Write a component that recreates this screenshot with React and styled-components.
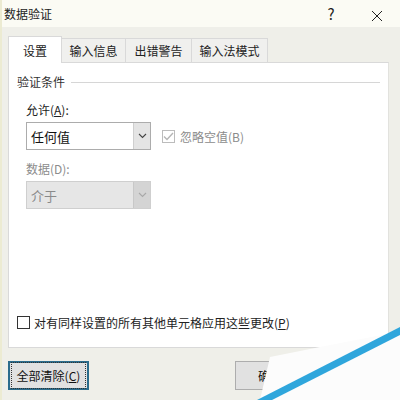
import React from 'react';
import styled, { createGlobalStyle } from 'styled-components';

const GlobalStyle = createGlobalStyle`
  html, body { margin: 0; padding: 0; }
  body {
    font-family: "Noto Sans CJK SC", "Noto Sans", sans-serif;
    font-size: 12px;
    color: #1a1a1a;
    background: #f0f0ea;
  }
`;

const Dialog = styled.div`
  position: relative;
  width: 400px;
  height: 400px;
  overflow: hidden;
  background: #efefe9;
  border-left: 2px solid #ecebd2;
  box-sizing: border-box;
`;

const TitleBar = styled.div`
  height: 27px;
  display: flex;
  align-items: center;
  padding-left: 2px;
  background: #fbfbf4;
`;

const Title = styled.div`
  flex: 1;
  font-size: 12px;
  color: #222;
`;

const TitleButton = styled.div`
  width: ${p => p.w}px;
  text-align: center;
  font-size: ${p => p.size}px;
  color: #222;
  line-height: 1;
`;

const Body = styled.div`
  padding: 9px 10px 0 6px;
`;

const TabRow = styled.div`
  display: flex;
  align-items: flex-end;
  height: 27px;
`;

const Tab = styled.div`
  box-sizing: border-box;
  width: ${p => p.w}px;
  height: ${p => (p.active ? 27 : 25)}px;
  display: flex;
  align-items: center;
  justify-content: center;
  background: ${p => (p.active ? '#fff' : '#f0f0ee')};
  border: 1px solid #d9d9d9;
  border-bottom: ${p => (p.active ? 'none' : '1px solid #d9d9d9')};
  margin-left: -1px;
  position: relative;
  z-index: ${p => (p.active ? 2 : 1)};
  font-size: 12px;
  color: #222;
  &:first-child { margin-left: 0; }
`;

const Panel = styled.div`
  box-sizing: border-box;
  width: 381px;
  height: 286px;
  margin-top: -1px;
  background: #fff;
  border: 1px solid #d9d9d9;
  border-right-color: #e2e2de;
  display: flex;
  flex-direction: column;
  padding: 10px 8px 0 8px;
`;

const GroupHead = styled.div`
  display: flex;
  align-items: center;
  gap: 6px;
  color: #333;
`;

const GroupLine = styled.div`
  flex: 1;
  height: 0;
  border-top: 1px solid #d6d6d6;
  margin-top: 2px;
`;

const Fields = styled.div`
  padding-left: 9px;
  margin-top: 11px;
`;

const Label = styled.div`
  color: ${p => (p.disabled ? '#8c8c8c' : '#222')};
  height: 18px;
  line-height: 18px;
  u { text-decoration: underline; }
`;

const FieldRow = styled.div`
  display: flex;
  align-items: center;
  gap: 11px;
  margin: 3px 0 ${p => p.mb || 0}px;
`;

const Combo = styled.div`
  box-sizing: border-box;
  width: 125px;
  height: 28px;
  display: flex;
  border: 1px solid ${p => (p.disabled ? '#cfcfcf' : '#acacac')};
  background: ${p => (p.disabled ? '#e6e6e6' : '#fff')};
`;

const ComboText = styled.div`
  flex: 1;
  display: flex;
  align-items: center;
  padding-left: 4px;
  font-size: 13px;
  color: ${p => (p.disabled ? '#8a8a8a' : '#111')};
`;

const ComboButton = styled.div`
  width: 16px;
  display: flex;
  align-items: center;
  justify-content: center;
  border-left: 1px solid ${p => (p.disabled ? '#c8c8c8' : '#cfcfcf')};
  background: ${p => (p.disabled ? '#d4d4d4' : '#e4e4e4')};
`;

const Check = styled.div`
  display: flex;
  align-items: center;
  gap: 5px;
  color: ${p => (p.disabled ? '#8c8c8c' : '#222')};
  font-size: 12px;
`;

const Box = styled.div`
  box-sizing: border-box;
  width: 13px;
  height: 13px;
  border: 1px solid ${p => (p.disabled ? '#bcbcbc' : '#333')};
  background: #fff;
  display: flex;
  align-items: center;
  justify-content: center;
`;

const Spacer = styled.div`
  flex: 1;
`;

const BottomCheck = styled(Check)`
  margin-bottom: 16px;
  gap: 4px;
`;

const Footer = styled.div`
  display: flex;
  align-items: center;
  gap: 146px;
  margin-top: 13px;
`;

const Button = styled.div`
  box-sizing: border-box;
  width: ${p => p.w}px;
  height: 29px;
  display: flex;
  align-items: center;
  justify-content: center;
  background: #e1e1e1;
  border: ${p => (p.focused ? '2px solid #2b6c8c' : '1px solid #adadad')};
  font-size: 12px;
  color: #111;
  span {
    padding: 2px 3px;
    outline: ${p => (p.focused ? '1px dotted #333' : 'none')};
    outline-offset: 2px;
  }
`;

const Watermark = styled.svg`
  position: absolute;
  left: 0;
  top: 0;
  pointer-events: none;
`;

const Chevron = ({ color }) => (
  <svg width="9" height="6" viewBox="0 0 9 6">
    <path d="M1 1 L4.5 4.5 L8 1" fill="none" stroke={color} strokeWidth="1.1" />
  </svg>
);

const Tick = () => (
  <svg width="11" height="9" viewBox="0 0 11 9">
    <path d="M1 4.5 L4 7.5 L10 1" fill="none" stroke="#b5b5b5" strokeWidth="1.4" />
  </svg>
);

const tabs = [
  { label: '设置', w: 54, active: true },
  { label: '输入信息', w: 65 },
  { label: '出错警告', w: 67 },
  { label: '输入法模式', w: 77 },
];

export default function App() {
  return (
    <>
      <GlobalStyle />
      <Dialog>
        <TitleBar>
          <Title>数据验证</Title>
          <TitleButton w={20} size={15}>?</TitleButton>
          <TitleButton w={21} size={0} />
          <TitleButton w={30} size={18}>
            <svg width="12" height="12" viewBox="0 0 12 12">
              <path d="M1 1 L11 11 M11 1 L1 11" stroke="#222" strokeWidth="1" />
            </svg>
          </TitleButton>
          <TitleButton w={8} size={0} />
        </TitleBar>

        <Body>
          <TabRow>
            {tabs.map(t => (
              <Tab key={t.label} w={t.w} active={t.active}>{t.label}</Tab>
            ))}
          </TabRow>

          <Panel>
            <GroupHead>
              验证条件
              <GroupLine />
            </GroupHead>

            <Fields>
              <Label>允许(<u>A</u>):</Label>
              <FieldRow mb={10}>
                <Combo>
                  <ComboText>任何值</ComboText>
                  <ComboButton><Chevron color="#444" /></ComboButton>
                </Combo>
                <Check disabled>
                  <Box disabled><Tick /></Box>
                  <span>忽略空值(B)</span>
                </Check>
              </FieldRow>

              <Label disabled>数据(D):</Label>
              <FieldRow>
                <Combo disabled>
                  <ComboText disabled>介于</ComboText>
                  <ComboButton disabled><Chevron color="#a8a8a8" /></ComboButton>
                </Combo>
              </FieldRow>
            </Fields>

            <Spacer />

            <BottomCheck>
              <Box />
              <span>对有同样设置的所有其他单元格应用这些更改(<u>P</u>)</span>
            </BottomCheck>
          </Panel>

          <Footer>
            <Button w={81} focused><span>全部清除(<u>C</u>)</span></Button>
            <Button w={70}><span>确定</span></Button>
          </Footer>
        </Body>

        <Watermark width="400" height="400" viewBox="0 0 400 400">
          <polygon points="268,357 323,346 400,331 400,400 258,400" fill="#fcfcfc" />
          <polygon points="255,400 400,326 400,334 270,400" fill="#2fa6dc" />
        </Watermark>
      </Dialog>
    </>
  );
}
